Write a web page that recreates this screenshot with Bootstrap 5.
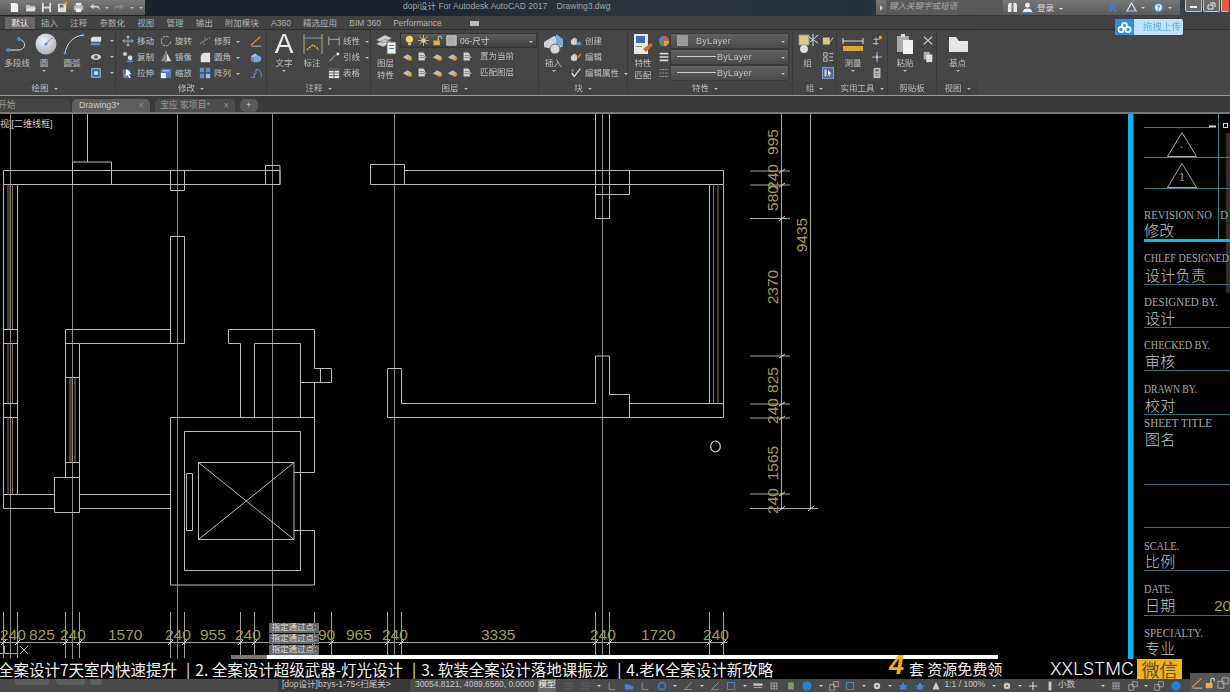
<!DOCTYPE html>
<html lang="zh-CN">
<head>
<meta charset="UTF-8">
<title>AutoCAD 2017 - Drawing3.dwg</title>
<link href="https://cdn.jsdelivr.net/npm/bootstrap@5.3.0/dist/css/bootstrap.min.css" rel="stylesheet">
<style>
html, body { height: 692px; overflow: hidden; background: #000; }
body { font-family: "Liberation Sans", "Noto Sans CJK SC", sans-serif; font-size: 8.5px; color: #c0c0c0; line-height: 12px; }
.app { width: 1230px; height: 692px; position: relative; overflow: hidden; }

/* title bar */
.titlebar { height: 16px; background: linear-gradient(90deg, #1a2530 0, #16202a 30%, #2b3640 50%, #26333f 70%, #3d444a 100%); color: #9ea4a8; font-size: 8.5px; }
.qat { width: 145px; height: 15px; background: linear-gradient(#7a7a7a, #575757); padding-left: 9px; gap: 5px; }
.qat svg { width: 11px; height: 11px; }
.qat i { width: 0; height: 0; border: 2px solid transparent; border-top-color: #bbb; margin-top: 2px; }
.doc-title { margin-left: 258px; width: 473px; }
.infocenter { width: 304px; height: 15px; background: linear-gradient(#777, #5a5a5a); color: #ddd; padding-right: 8px; padding-left: 4px; }
.inf-arrow { width: 0; height: 0; border: 3px solid transparent; border-left-color: #ccc; border-right: 0; }
.searchbox { width: 117px; height: 15px; margin-left: 3px; background: #5a5a5a; color: #a8a8a8; font-style: italic; padding-left: 3px; }
.infocenter svg { width: 11px; height: 11px; }
.inf-car { width: 0; height: 0; border: 2.5px solid transparent; border-top-color: #ccc; margin-top: 3px; }
.winbtns { margin-left: 5px; gap: 1px; width: 45px; height: 12px; }
.winbtn { flex: none; width: 17px; height: 12px; background: #6a6a6a; border: 1px solid #c4c4c4; border-top: 0; border-radius: 0 0 2px 2px; display: flex; align-items: center; justify-content: center; }
.winbtn svg { width: 9px; height: 8px; }
.winbtn.closer { background: #d8603c; width: 8px; border-right: 0; }

/* ribbon tabs */
.rtabs { height: 14px; background: #424242; border-bottom: 1px solid #2f2f2f; padding-left: 5px; padding-top: 1px; }
.rtab { padding: 0 6.1px; line-height: 12px; color: #b0b0b0; }
.rtab.on { background: #666; color: #eee; padding: 0 6.500px; }
.rtab.last-tab { margin-right: 22px; }
.mini-box { width: 9px; height: 5px; background: #bbb; margin-top: 4px; }

/* ribbon */
.rbn { height: 66px; background: #454545; border-bottom: 1px solid #9a9a9a; filter: blur(.3px); }
.rpanel { border-right: 1px solid #3a3a3a; }
.rbody { height: 52px; padding-top: 3px; }
.rfoot { height: 13px; line-height: 13px; text-align: center; background: #434343; color: #bdbdbd; }
.rfoot.shift { padding-right: 10px; }
.rfoot.shift-more { padding-right: 26px; }
.dropdown-toggle::after { margin-left: 5px; vertical-align: 1px; }
.p-draw { width: 116px; } .p-mod { width: 151px; padding-left: 6px; } .p-ann { width: 104px; }
.p-lay { width: 168px; } .p-blk { width: 89px; } .p-prop { width: 165px; } .p-grp { width: 44px; }
.p-util { width: 51px; } .p-clip { width: 49px; } .p-view { width: 41px; border-right: 0; }
.rfill { flex: 1; background: #464646; }
.p-mod .rfoot { margin-left: -6px; }
.lgt { text-align: center; flex: none; }
.lgt svg { width: 24px; height: 22px; display: block; margin: 0 auto 2px; }
.lgt .caret-only { width: 0; height: 0; border: 2.5px solid transparent; border-top-color: #bbb; display: block; margin: 1px auto 0; }
.big-a { font-size: 28px; line-height: 22px; height: 22px; margin-bottom: 2px; color: #e8e8e8; }
.w20 { width: 20px; } .w22 { width: 22px; } .w29 { width: 29px; } .w30 { width: 30px; } .w32 { width: 32px; } .w34 { width: 34px; } .w41 { width: 41px; }
.ml8 { margin-left: 8px; }
.scol { flex: none; }
.srow { height: 16px; display: flex; align-items: center; gap: 3px; white-space: nowrap; }
.srow svg { width: 12px; height: 12px; flex: none; }
.c38 { width: 38px; } .c39 { width: 39px; } .c51 { width: 51px; }
.c8 { margin-left: 8px; }
.nudge { margin-left: 5px; } .nudge2 { margin-left: 2px; }
.cmb { height: 15px; width: 137px; background: linear-gradient(#5c5c5c, #3f3f3f); border: 1px solid #333; display: flex; align-items: center; padding-left: 3px; gap: 3px; color: #ccc; }
.cmb svg { width: 11px; height: 11px; }
.cmb-end { margin-left: auto; margin-right: 3px; }
.layer-rows { width: 137px; }
.layer-rows .srow { gap: 4px; padding-left: 2px; }
.layer-rows svg { width: 11px; height: 11px; }
.layer-rows em { font-style: normal; margin-left: 3px; }
.pcol { width: 12px; }
.pcmb { width: 119px; height: 15.500px; background: linear-gradient(#616161, #4a4a4a); border: 1px solid #3a3a3a; margin-bottom: .5px; display: flex; align-items: center; padding-left: 6px; font-size: 9px; letter-spacing: .3px; }
.swatch { width: 11px; height: 11px; background: #9b9b9b; margin-right: 8px; }
.lnw { width: 39px; height: 1px; background: #ccc; margin-right: 1px; }
.hi-cell { background: #4d6a96; border: 1px solid #7e9ac4; }

/* document tabs */
.dtabs { height: 18px; background: #3b3b3b; border-bottom: 2px solid #777; padding-top: 3px; }
.dtab { height: 13px; line-height: 13px; border-radius: 5px 5px 0 0; padding-left: 7px; color: #9b9b9b; font-size: 8.8px; display: flex; justify-content: space-between; }
.dtab b { font-weight: 400; padding-right: 6px; color: #8a8a8a; font-size: 10px; }
.t-start { width: 78px; margin-left: -8px; background: #444; margin-right: 2px; padding-left: 6px; }
.t-draw { width: 78px; background: #5e5e5e; color: #c9c9c9; margin-right: 5px; }
.t-proj { width: 80px; background: #4d4d4d; margin-right: 5px; padding-left: 5px; }
.t-plus { width: 18px; background: #585858; padding-left: 6px; color: #ccc; border-radius: 5px; }

/* model space */
.stage { height: 545px; position: relative; background: #000; }
.stage svg.draw { position: absolute; inset: 0; width: 1230px; height: 545px; }
.draw text { font-family: "Liberation Sans", "Noto Sans CJK SC", sans-serif; }
.draw .dim { fill: #a49e48; font-size: 15.500px; }
.draw .en { fill: #a8a8a8; font-family: "Liberation Serif", serif; font-size: 11.500px; }
.draw .zh { fill: #c4c4c4; font-size: 15px; font-weight: 300; letter-spacing: .3px; }
.draw .vp { fill: #d0d0d0; font-size: 9px; }
.prompt { position: absolute; left: 269px; width: 50px; height: 9.500px; background: #666; color: #ddd; font-size: 8.5px; line-height: 9.500px; text-align: center; white-space: nowrap; }
.pr1 { top: 509px; } .pr2 { top: 520px; } .pr3 { top: 531px; }
.seek { position: absolute; left: 231px; bottom: 0; width: 767px; height: 4px; background: linear-gradient(90deg, #777 0, #777 36px, #fff 36px); }

/* subtitle strip */
.subs { height: 20px; background: #000; color: #f2f2f2; white-space: nowrap; position: relative; }
.subs-text { font-family: "Noto Sans CJK SC", sans-serif; font-size: 15.500px; line-height: 20px; margin-left: -2px; width: 891px; flex: none; overflow: hidden; }
.sub-sep { margin: 0 5px 0 9px; }
.four { font-family: "Liberation Sans", sans-serif; font-weight: 700; font-style: italic; font-size: 27px; color: #f2b01e; width: 20px; line-height: 20px; margin-top: -4px; flex: none; }
.free { font-family: "Noto Sans CJK SC", sans-serif; font-size: 15px; line-height: 20px; width: 141px; flex: none; }
.wxid { font-family: "Inter", "Liberation Sans", sans-serif; font-weight: 300; font-size: 17.500px; line-height: 20px; width: 87px; flex: none; }
.wx { width: 45px; height: 20px; background: #f0b418; color: #5d4f2a; font-family: "Noto Sans CJK SC", sans-serif; font-size: 18px; line-height: 20px; text-align: center; flex: none; }

/* status bar */
.sbar { height: 13px; background: #4a4a4a; color: #c4c4c4; font-size: 8.5px; line-height: 11px; white-space: nowrap; overflow: hidden; }
.ltab { height: 6px; background: #5e5e5e; border-radius: 0 0 4px 4px; flex: none; }
.l1 { width: 34px; margin-left: 15px; } .l2 { width: 29px; margin-left: 7px; } .l3 { width: 12px; margin-left: 5px; }
.sb-file { width: 132px; height: 13px; background: #383838; margin-left: 176px; padding-left: 4px; flex: none; }
.sb-xyz { width: 128px; padding-left: 5px; flex: none; letter-spacing: -.05px; }
.sb-model { width: 18px; background: #686868; color: #eee; text-align: center; flex: none; margin-right: 5px; }
.sslot { width: 16.500px; height: 13px; flex: none; display: flex; align-items: center; justify-content: center; }
.sslot svg { width: 10px; height: 10px; }
.sw8 { width: 10px; }
.scar { width: 0; height: 0; border: 2.5px solid transparent; border-top-color: #ccc; margin-top: 3px; }
.sb-scale { width: 44px; flex: none; }
.sb-dec { width: 40px; flex: none; }
.tray { position: absolute; right: 0; bottom: 0; width: 40px; height: 19px; background: #555; display: flex; align-items: center; justify-content: space-around; }
.tray svg { width: 12px; height: 12px; }

/* upload badge */
.upload { position: absolute; left: 1115px; top: 19px; width: 68px; height: 16px; background: #bfe3fb; border-radius: 2px; color: #68aee4; font-size: 9.500px; line-height: 16px; }
.up-ic { width: 19px; height: 16px; background: #2b8ee8; border-radius: 2px 0 0 2px; margin-right: 9px; }
.up-ic svg { width: 15px; height: 11px; }
</style>
</head>
<body>
<svg width="0" height="0" class="position-absolute">
  <defs>
    <radialGradient id="gcirc" cx=".4" cy=".35" r=".7"><stop offset="0" stop-color="#f4f4f8"/><stop offset="1" stop-color="#a8acb8"/></radialGradient>
    <symbol id="q-new" viewBox="0 0 12 12"><path d="M2 1h6l2 2v8H2z" fill="#eee"/></symbol>
    <symbol id="q-open" viewBox="0 0 12 12"><path d="M1 3h4l1 1h5v6H1z" fill="#bbb"/><path d="M3 6h9l-2 4H1z" fill="#ddd"/></symbol>
    <symbol id="q-save" viewBox="0 0 12 12"><path d="M1 1h10v10H1z" fill="#ddd"/><path d="M3 1h6v4H3zM3 7h6v4H3z" fill="#666"/></symbol>
    <symbol id="q-saveas" viewBox="0 0 12 12"><path d="M1 2h9v9H1z" fill="#ddd"/><path d="M3 3h4v3H3z" fill="#666"/><path d="M8 0h3v3H8z" fill="#d99a2b"/></symbol>
    <symbol id="q-print" viewBox="0 0 12 12"><path d="M3 1h6v3H3z" fill="#eee"/><path d="M1 4h10v5H1z" fill="#bbb"/><path d="M3 7h6v4H3z" fill="#eee"/></symbol>
    <symbol id="q-undo" viewBox="0 0 12 12"><path d="M1 5l4-3v2h3c3 0 4 2 4 5-1-2-2-3-4-3H5v2z" fill="#ccc"/></symbol>
    <symbol id="q-redo" viewBox="0 0 12 12"><path d="M11 5L7 2v2H4C1 4 0 6 0 9c1-2 2-3 4-3h3v2z" fill="#8a8a8a"/></symbol>
    <symbol id="q-bino" viewBox="0 0 12 12"><path d="M1 4l1-3h3v10H1zM7 1h3l1 3v7H7z" fill="#e6e6e6"/><path d="M5 4h2v3H5z" fill="#999"/></symbol>
    <symbol id="q-user" viewBox="0 0 12 12"><circle cx="6" cy="3.500" r="2.700" fill="#eee"/><path d="M1 11c0-3 2-4 5-4s5 1 5 4z" fill="#eee"/><path d="M0 11.300h12" stroke="#5b8fd0"/></symbol>
    <symbol id="q-x" viewBox="0 0 12 12"><path d="M1 1h3l2 3 2-3h3L8 6l3 5H8L6 8l-2 3H1l3-5z" fill="#4a74c8"/></symbol>
    <symbol id="q-tri" viewBox="0 0 12 12"><path d="M6 1l5 9H1z" fill="none" stroke="#e4e8f4" stroke-width="1.300"/><path d="M1 10h10" stroke="#6a8fd8" stroke-width="1.500"/></symbol>
    <symbol id="q-help" viewBox="0 0 12 12"><circle cx="6" cy="6" r="5.700" fill="#3f7fd0"/><circle cx="6" cy="6" r="3.800" fill="#e8eef8"/><path d="M5 5c0-1.500 2-1.500 2 0 0 1-1 1-1 2M6 8v1" fill="none" stroke="#2f5fa8"/></symbol>
    <symbol id="w-min" viewBox="0 0 9 8"><path d="M1 4h7v2H1z" fill="#eee"/></symbol>
    <symbol id="w-res" viewBox="0 0 9 8"><path d="M1 3h5v4H1zM3 1h5v4" fill="none" stroke="#eee"/></symbol>

    <symbol id="i-move" viewBox="0 0 14 14"><path d="M7 1v12M1 7h12M5 3l2-2 2 2M5 11l2 2 2-2M3 5L1 7l2 2M11 5l2 2-2 2" fill="none" stroke="#ccc"/><circle cx="7" cy="7" r="1.600" fill="#5b8fd0"/></symbol>
    <symbol id="i-copy" viewBox="0 0 14 14"><circle cx="3.500" cy="3.500" r="2.400" fill="#c8c8c8"/><circle cx="9.500" cy="8" r="2.800" fill="#ddd"/><path d="M6 11h7v2H6z" fill="#5b8fd0"/></symbol>
    <symbol id="i-stretch" viewBox="0 0 14 14"><path d="M1 3h9v10H1z" fill="#4d7dbf"/><path d="M5 2l6 6-3 .5 2 4-1.500.7-2-4L4 11z" fill="#fff"/></symbol>
    <symbol id="i-rotate" viewBox="0 0 14 14"><path d="M10 2.500A5.500 5.500 0 1 0 12.500 7" fill="none" stroke="#ccc" stroke-dasharray="3 1"/></symbol>
    <symbol id="i-mirror" viewBox="0 0 14 14"><path d="M6 2v10H1z" fill="#8a8a8a"/><path d="M8 2v10h5z" fill="#ddd"/><path d="M7 0v14" stroke="#ccc"/></symbol>
    <symbol id="i-scale" viewBox="0 0 14 14"><path d="M1 2h12v11H1z" fill="#4d7dbf"/><path d="M1 7h6v6H1z" fill="#eee"/><path d="M3 4h8v1H3z" fill="#dfe8f5"/></symbol>
    <symbol id="i-trim" viewBox="0 0 14 14"><path d="M1 10L13 3" stroke="#bbb" stroke-dasharray="2 1"/><path d="M7 2v4" stroke="#5b8fd0"/><path d="M4 9l3 3" stroke="#999"/></symbol>
    <symbol id="i-fillet" viewBox="0 0 14 14"><path d="M2 13V7c0-3 2-5 5-5h6v11z" fill="#e2e2e2"/><path d="M2 3h3L2 6z" fill="#5b8fd0"/></symbol>
    <symbol id="i-array" viewBox="0 0 14 14"><path d="M1 1h5v5H1zM8 1h5v5H8zM1 8h5v5H1zM8 8h5v5H8z" fill="#5b8fd0"/><path d="M8 8h5v5H8z" fill="#9cc0ec"/></symbol>
    <symbol id="i-erase" viewBox="0 0 14 14"><path d="M1 12L12 2" stroke="#d5913a" stroke-width="1.500"/><path d="M2 13h11" stroke="#ccc"/></symbol>
    <symbol id="i-cube" viewBox="0 0 14 14"><path d="M1 6l5-3 3 2-5 3z" fill="#aac6ea"/><path d="M1 6v5l3 2V8z" fill="#5b8fd0"/><path d="M9 5l4 2v4l-4 2-5 0V8z" fill="#7ba6dd"/></symbol>
    <symbol id="i-offs" viewBox="0 0 14 14"><path d="M1 12h4V8h2V3h3l3 4v5" fill="none" stroke="#6fa0dc"/></symbol>
    <symbol id="i-rect" viewBox="0 0 14 14"><path d="M1 4l2-2h10v6H1z" fill="#dcdcdc"/><path d="M1 9h11v3H1z" fill="#5b8fd0"/></symbol>
    <symbol id="i-eye" viewBox="0 0 14 14"><ellipse cx="7" cy="7" rx="6" ry="3.500" fill="#ccc"/><circle cx="7" cy="7" r="2" fill="#555"/></symbol>
    <symbol id="i-hatch" viewBox="0 0 14 14"><path d="M2 2h10v10H2z" fill="#3f68a5" stroke="#b8c8de"/><path d="M5 5h4v4H5z" fill="#dfe8f5"/></symbol>
    <symbol id="i-lin" viewBox="0 0 14 14"><path d="M1 2v10M13 2v10M1 5h12" fill="none" stroke="#bbb"/></symbol>
    <symbol id="i-lead" viewBox="0 0 14 14"><path d="M2 12L8 5" stroke="#ccc"/><path d="M10 2h3v3h-3z" fill="#eee"/></symbol>
    <symbol id="i-table" viewBox="0 0 14 14"><path d="M1 2h12v11H1z" fill="#e4e4e4"/><path d="M1 2h12v2H1zM1 7h12M1 10h12M7 4v9" stroke="#555" fill="#555"/></symbol>
    <symbol id="i-lyr" viewBox="0 0 14 14"><path d="M2 2h6l2 2v8H2z" fill="#d0d0d0"/><path d="M3 5h6v1H3zM3 8h6v1H3z" fill="#4d7dbf"/><path d="M9 6l4 2-4 2z" fill="#a8a8a8"/></symbol>
    <symbol id="i-lyr2" viewBox="0 0 14 14"><path d="M1 8l6-4 6 4-6 3z" fill="#bdbdbd"/><circle cx="10" cy="10" r="2.500" fill="#e0a92c"/></symbol>
    <symbol id="i-bulb" viewBox="0 0 14 14"><circle cx="7" cy="5.500" r="4.500" fill="#f0d660"/><path d="M5 10h4v3H5z" fill="#bbb"/></symbol>
    <symbol id="i-sun" viewBox="0 0 14 14"><circle cx="7" cy="7" r="3" fill="#e8d8a0"/><path d="M7 0v14M0 7h14M2 2l10 10M12 2L2 12" stroke="#d9c890"/></symbol>
    <symbol id="i-lock" viewBox="0 0 14 14"><path d="M2 7h8v6H2z" fill="#e0b040"/><path d="M8 7V3c0-2 4-2 4 0v2" fill="none" stroke="#ddd" stroke-width="1.200"/></symbol>
    <symbol id="i-swatch" viewBox="0 0 14 14"><path d="M1 1h12v12H1z" fill="#aaa" stroke="#ddd"/></symbol>
    <symbol id="i-make" viewBox="0 0 14 14"><path d="M1 6l4-3 3 2v6l-4 1-3-2z" fill="#ccc"/><path d="M8 8h5v4H8z" fill="#5b8fd0"/></symbol>
    <symbol id="i-blkedit" viewBox="0 0 14 14"><path d="M1 6l4-3 3 2v6l-4 1-3-2z" fill="#ccc"/><path d="M8 8l4-5 1 1-4 5z" fill="#e0a030"/></symbol>
    <symbol id="i-attr" viewBox="0 0 14 14"><path d="M2 7l3 4 7-9" fill="none" stroke="#ddd" stroke-width="1.500"/><circle cx="3" cy="4" r="1.500" fill="#d07030"/></symbol>
    <symbol id="i-wheel" viewBox="0 0 14 14"><path d="M7 7V1a6 6 0 0 1 6 6z" fill="#d05a40"/><path d="M7 7h6a6 6 0 0 1-6 6z" fill="#e0a030"/><path d="M7 7v6a6 6 0 0 1-6-6z" fill="#4d9a5a"/><path d="M7 7H1a6 6 0 0 1 6-6z" fill="#5b7fd0"/></symbol>
    <symbol id="i-lines" viewBox="0 0 14 14"><path d="M2 2h10v2H2zM2 6h10v2H2zM2 10h10v2H2z" fill="#ddd"/></symbol>
    <symbol id="i-dash" viewBox="0 0 14 14"><path d="M2 3h10M2 7h10M2 11h10" stroke="#aaa" stroke-dasharray="2 1"/></symbol>
    <symbol id="i-gp1" viewBox="0 0 14 14"><path d="M1 3h8v8H1z" fill="#d8cb88"/><path d="M7 11l6-8" stroke="#ddd"/></symbol>
    <symbol id="i-gp2" viewBox="0 0 14 14"><path d="M2 2h4v4H2zM2 8h4v4H2z" fill="none" stroke="#ccc"/><path d="M8 3h5M8 7h5M8 11h5" stroke="#ccc"/></symbol>
    <symbol id="i-gp3" viewBox="0 0 14 14"><path d="M2 2h3v10H2z" fill="#ccd"/><path d="M7 3l5 5-3 .5 1 3-1 .5-1.500-3L7 11z" fill="#fff"/></symbol>
    <symbol id="i-pt" viewBox="0 0 14 14"><path d="M2 10h7M6 3v9M3 5h7" stroke="#ccc"/><circle cx="11" cy="3" r="2" fill="#e0a030"/></symbol>
    <symbol id="i-star" viewBox="0 0 14 14"><path d="M7 1v12M1 7h12" stroke="#ccc"/><path d="M7 4l1 3-1 3-1-3z" fill="#ddd"/></symbol>
    <symbol id="i-calc" viewBox="0 0 14 14"><path d="M3 1h8v12H3z" fill="#bbb"/><path d="M5 3h4v2H5zM5 7h4v1H5zM5 9h4v1H5z" fill="#555"/></symbol>
    <symbol id="i-cut" viewBox="0 0 14 14"><path d="M2 2l10 9M12 2L2 11" stroke="#ddd" stroke-width="1.200"/></symbol>
    <symbol id="i-pcopy" viewBox="0 0 14 14"><path d="M2 1h7v9H2z" fill="#aaa"/><path d="M5 4h7v9H5z" fill="#ddd"/></symbol>
    <symbol id="s-grid" viewBox="0 0 14 14"><path d="M1 3h12M1 7h12M1 11h12" stroke="#888" stroke-dasharray="1 1"/></symbol>
    <symbol id="s-l" viewBox="0 0 14 14"><path d="M3 2v10h9" fill="none" stroke="#aaa"/></symbol>
    <symbol id="s-blue" viewBox="0 0 14 14"><path d="M1 5h6l6 3v4H1z" fill="#3f86d8"/></symbol>
    <symbol id="s-arc" viewBox="0 0 14 14"><circle cx="7" cy="7" r="5" fill="none" stroke="#3f86d8" stroke-width="2"/></symbol>
    <symbol id="s-ang" viewBox="0 0 14 14"><path d="M2 12L12 2M2 12h10" fill="none" stroke="#aaa"/></symbol>
    <symbol id="s-box" viewBox="0 0 14 14"><path d="M2 2h10v10H2z" fill="none" stroke="#3f86d8" stroke-width="1.500"/></symbol>
    <symbol id="s-ln" viewBox="0 0 14 14"><path d="M1 4h12v2H1zM1 9h12" stroke="#ccc" fill="#ccc"/></symbol>
    <symbol id="s-hat" viewBox="0 0 14 14"><path d="M2 2h10v10H2z" fill="#999"/><path d="M2 5h10M2 9h10M5 2v10M9 2v10" stroke="#555"/></symbol>
    <symbol id="s-grn" viewBox="0 0 14 14"><path d="M3 2h8v10H3z" fill="#7f9a64"/></symbol>
    <symbol id="s-man" viewBox="0 0 14 14"><path d="M7 1l5 11H2z" fill="#3f86d8"/><path d="M1 7h12" stroke="#3f86d8" stroke-width="2"/></symbol>
    <symbol id="s-manw" viewBox="0 0 14 14"><path d="M7 1l5 11H2z" fill="#ccc"/></symbol>
    <symbol id="s-gear" viewBox="0 0 14 14"><circle cx="7" cy="7" r="4.500" fill="#ccc"/><circle cx="7" cy="7" r="1.500" fill="#555"/></symbol>
    <symbol id="s-plus" viewBox="0 0 14 14"><path d="M7 1v12M1 7h12" stroke="#ddd" stroke-width="1.500"/></symbol>
    <symbol id="s-bar" viewBox="0 0 14 14"><path d="M5 1h4v12H5z" fill="#ccc"/></symbol>
    <symbol id="s-win" viewBox="0 0 14 14"><path d="M1 5h7v8H1z" fill="none" stroke="#bbb"/><path d="M6 1h7v7H6z" fill="none" stroke="#bbb"/></symbol>
    <symbol id="s-ok" viewBox="0 0 14 14"><circle cx="7" cy="7" r="6.500" fill="#2b7fd8"/></symbol>
  </defs>
</svg>

<div class="app d-flex flex-column">
  <header class="titlebar d-flex align-items-start flex-shrink-0">
    <div class="qat d-flex align-items-center flex-shrink-0">
      <svg><use href="#q-new"/></svg><svg><use href="#q-open"/></svg><svg><use href="#q-save"/></svg><svg><use href="#q-saveas"/></svg><svg><use href="#q-print"/></svg><svg><use href="#q-undo"/></svg><i></i><svg><use href="#q-redo"/></svg><i></i><i></i>
    </div>
    <div class="doc-title flex-shrink-0">dopi设计 For Autodesk AutoCAD 2017 &nbsp;&nbsp;&nbsp;Drawing3.dwg</div>
    <div class="infocenter d-flex align-items-center flex-shrink-0">
      <i class="inf-arrow"></i>
      <div class="searchbox">键入关键字或短语</div>
      <svg class="ms-1"><use href="#q-bino"/></svg>
      <svg class="ms-1"><use href="#q-user"/></svg>
      <span class="ms-1 dropdown-toggle flex-grow-1">登录</span>
      <svg><use href="#q-x"/></svg>
      <svg class="ms-2"><use href="#q-tri"/></svg><i class="inf-car ms-1"></i>
      <svg class="ms-2"><use href="#q-help"/></svg><i class="inf-car ms-1"></i>
    </div>
    <div class="winbtns d-flex flex-shrink-0">
      <div class="winbtn"><svg><use href="#w-min"/></svg></div><div class="winbtn"><svg><use href="#w-res"/></svg></div><div class="winbtn closer"></div>
    </div>
  </header>

  <nav class="rtabs d-flex flex-shrink-0">
    <span class="rtab on">默认</span><span class="rtab">插入</span><span class="rtab">注释</span><span class="rtab">参数化</span><span class="rtab">视图</span><span class="rtab">管理</span><span class="rtab">输出</span><span class="rtab">附加模块</span><span class="rtab">A360</span><span class="rtab">精选应用</span><span class="rtab">BIM 360</span><span class="rtab last-tab">Performance</span><span class="mini-box"></span>
  </nav>

  <section class="rbn d-flex flex-shrink-0">
    <div class="rpanel p-draw">
      <div class="rbody d-flex">
        <div class="lgt w34"><svg viewBox="0 0 24 22"><path d="M2 17h11c8 0 9-9 1-11" fill="none" stroke="#e6e6e6"/><circle cx="3" cy="17" r="2" fill="#4f8ad0"/><circle cx="14" cy="6" r="2" fill="#4f8ad0"/></svg>多段线</div>
        <div class="lgt w20"><svg viewBox="0 0 24 22"><circle cx="12" cy="11" r="10.500" fill="url(#gcirc)"/><path d="M12 11l6-6" stroke="#5b8fd0"/><circle cx="12" cy="11" r="1.500" fill="#5b8fd0"/></svg>圆<i class="caret-only"></i></div>
        <div class="lgt w20 ml8"><svg viewBox="0 0 24 22"><path d="M3 21C4 11 11 3 21 2" fill="none" stroke="#ddd"/><circle cx="3" cy="20" r="1.500" fill="#5b8fd0"/><circle cx="21" cy="2" r="1.500" fill="#5b8fd0"/></svg>圆弧<i class="caret-only"></i></div>
        <div class="scol c8">
          <div class="srow dropdown-toggle"><svg><use href="#i-rect"/></svg></div>
          <div class="srow dropdown-toggle"><svg><use href="#i-eye"/></svg></div>
          <div class="srow dropdown-toggle"><svg><use href="#i-hatch"/></svg></div>
        </div>
      </div>
      <div class="rfoot shift-more"><span class="dropdown-toggle">绘图</span></div>
    </div>

    <div class="rpanel p-mod">
      <div class="rbody d-flex">
        <div class="scol c38">
          <div class="srow"><svg><use href="#i-move"/></svg>移动</div>
          <div class="srow"><svg><use href="#i-copy"/></svg>复制</div>
          <div class="srow"><svg><use href="#i-stretch"/></svg>拉伸</div>
        </div>
        <div class="scol c39">
          <div class="srow"><svg><use href="#i-rotate"/></svg>旋转</div>
          <div class="srow"><svg><use href="#i-mirror"/></svg>镜像</div>
          <div class="srow"><svg><use href="#i-scale"/></svg>缩放</div>
        </div>
        <div class="scol c51">
          <div class="srow"><svg><use href="#i-trim"/></svg><span class="dropdown-toggle">修剪</span></div>
          <div class="srow"><svg><use href="#i-fillet"/></svg><span class="dropdown-toggle">圆角</span></div>
          <div class="srow"><svg><use href="#i-array"/></svg><span class="dropdown-toggle">阵列</span></div>
        </div>
        <div class="scol">
          <div class="srow"><svg><use href="#i-erase"/></svg></div>
          <div class="srow"><svg><use href="#i-cube"/></svg></div>
          <div class="srow"><svg><use href="#i-offs"/></svg></div>
        </div>
      </div>
      <div class="rfoot"><span class="dropdown-toggle">修改</span></div>
    </div>

    <div class="rpanel p-ann">
      <div class="rbody d-flex">
        <div class="lgt w34"><div class="big-a">A</div>文字<i class="caret-only"></i></div>
        <div class="lgt w22"><svg viewBox="0 0 24 22"><path d="M3 1v20M21 1v20" stroke="#b9a878"/><path d="M3 5h18" stroke="#6fa0dc"/><path d="M6 17l3-3 3-2 3 2 3 3" fill="none" stroke="#e0b040" stroke-dasharray="2 1" stroke-width="1.500"/></svg>标注</div>
        <div class="scol nudge">
          <div class="srow"><svg><use href="#i-lin"/></svg><span class="dropdown-toggle">线性</span></div>
          <div class="srow"><svg><use href="#i-lead"/></svg><span class="dropdown-toggle">引线</span></div>
          <div class="srow"><svg><use href="#i-table"/></svg>表格</div>
        </div>
      </div>
      <div class="rfoot"><span class="dropdown-toggle">注释</span></div>
    </div>

    <div class="rpanel p-lay">
      <div class="rbody d-flex">
        <div class="lgt w29"><svg viewBox="0 0 24 22"><path d="M2 7l9-5 7 3-9 5zM2 11l9-5 7 3-9 5z" fill="#d0d0d0" stroke="#555" stroke-width=".5"/><path d="M13 9h9v12h-9z" fill="#eee" stroke="#666"/><path d="M15 12h5v1h-5zM15 15h5v1h-5z" fill="#4d7dbf"/></svg>图层<br>特性</div>
        <div class="layer-rows">
          <div class="cmb"><svg><use href="#i-bulb"/></svg><svg><use href="#i-sun"/></svg><svg><use href="#i-lock"/></svg><svg><use href="#i-swatch"/></svg><span>06-尺寸</span><span class="cmb-end dropdown-toggle"></span></div>
          <div class="srow"><svg><use href="#i-lyr2"/></svg><svg><use href="#i-lyr"/></svg><svg><use href="#i-lyr2"/></svg><svg><use href="#i-lyr2"/></svg><svg><use href="#i-lyr"/></svg><em>置为当前</em></div>
          <div class="srow"><svg><use href="#i-lyr2"/></svg><svg><use href="#i-lyr"/></svg><svg><use href="#i-lyr2"/></svg><svg><use href="#i-lyr2"/></svg><svg><use href="#i-lyr"/></svg><em>匹配图层</em></div>
        </div>
      </div>
      <div class="rfoot"><span class="dropdown-toggle">图层</span></div>
    </div>

    <div class="rpanel p-blk">
      <div class="rbody d-flex">
        <div class="lgt w29"><svg viewBox="0 0 24 22"><path d="M2 9l10-6 8 3v8l-10 2-8-2z" fill="#c9d3e0"/><path d="M14 1l7 5v8l-7-3z" fill="#7ea6d8"/><circle cx="13" cy="16" r="5" fill="#d8d8d8" stroke="#666"/></svg>插入<i class="caret-only"></i></div>
        <div class="scol nudge2">
          <div class="srow"><svg><use href="#i-make"/></svg>创建</div>
          <div class="srow"><svg><use href="#i-blkedit"/></svg>编辑</div>
          <div class="srow"><svg><use href="#i-attr"/></svg><span class="dropdown-toggle">编辑属性</span></div>
        </div>
      </div>
      <div class="rfoot"><span class="dropdown-toggle">块</span></div>
    </div>

    <div class="rpanel p-prop">
      <div class="rbody d-flex">
        <div class="lgt w30"><svg viewBox="0 0 24 22"><path d="M3 1h14v20H3z" fill="#e8e8e8"/><path d="M5 3h9v7H5z" fill="#3f6ea8"/><path d="M5 13h6v1H5z" fill="#888"/><path d="M12 16l8-6 2 2-7 7z" fill="#c0752a"/></svg>特性<br>匹配</div>
        <div class="pcol">
          <div class="srow"><svg><use href="#i-wheel"/></svg></div>
          <div class="srow"><svg><use href="#i-lines"/></svg></div>
          <div class="srow"><svg><use href="#i-dash"/></svg></div>
        </div>
        <div>
          <div class="pcmb"><span class="swatch"></span>ByLayer<span class="cmb-end dropdown-toggle"></span></div>
          <div class="pcmb"><span class="lnw"></span>ByLayer<span class="cmb-end dropdown-toggle"></span></div>
          <div class="pcmb"><span class="lnw"></span>ByLayer<span class="cmb-end dropdown-toggle"></span></div>
        </div>
      </div>
      <div class="rfoot shift"><span class="dropdown-toggle">特性</span></div>
    </div>

    <div class="rpanel p-grp">
      <div class="rbody d-flex">
        <div class="lgt w29"><svg viewBox="0 0 24 22"><path d="M3 2h10v10H3z" fill="#d8cb88" stroke="#999"/><circle cx="8" cy="16" r="4" fill="#ddd"/><path d="M14 9l8-7M13 4l9 6M17 1v12" stroke="#cfe4fa"/></svg>组</div>
        <div class="scol">
          <div class="srow"><svg><use href="#i-gp1"/></svg></div>
          <div class="srow"><svg><use href="#i-gp2"/></svg></div>
          <div class="srow"><svg class="hi-cell"><use href="#i-gp3"/></svg></div>
        </div>
      </div>
      <div class="rfoot"><span class="dropdown-toggle">组</span></div>
    </div>

    <div class="rpanel p-util">
      <div class="rbody d-flex">
        <div class="lgt w32"><svg viewBox="0 0 24 22"><path d="M2 5v6M22 5v6M2 8h20" stroke="#ddd"/><path d="M2 13h20v5H2z" fill="#d8a63a"/></svg>测量<i class="caret-only"></i></div>
        <div class="scol nudge2">
          <div class="srow"><svg><use href="#i-pt"/></svg></div>
          <div class="srow"><svg><use href="#i-star"/></svg></div>
          <div class="srow"><svg><use href="#i-calc"/></svg></div>
        </div>
      </div>
      <div class="rfoot"><span class="dropdown-toggle">实用工具</span></div>
    </div>

    <div class="rpanel p-clip">
      <div class="rbody d-flex">
        <div class="lgt w34"><svg viewBox="0 0 24 22"><path d="M4 3h12v16H4z" fill="#a9a9a9"/><path d="M8 1h4v3H8z" fill="#ddd"/><path d="M10 7h10v14H10z" fill="#efefef"/></svg>粘贴<i class="caret-only"></i></div>
        <div class="scol">
          <div class="srow"><svg><use href="#i-cut"/></svg></div>
          <div class="srow"><svg><use href="#i-pcopy"/></svg></div>
        </div>
      </div>
      <div class="rfoot">剪贴板</div>
    </div>

    <div class="rpanel p-view">
      <div class="rbody d-flex">
        <div class="lgt w41"><svg viewBox="0 0 24 22"><path d="M3 4h7l3 4h9v11H3z" fill="#e6e6e6"/></svg>基点<i class="caret-only"></i></div>
      </div>
      <div class="rfoot"><span class="dropdown-toggle">视图</span></div>
    </div>
    <div class="rfill"></div>
  </section>

  <div class="dtabs d-flex flex-shrink-0">
    <div class="dtab t-start">开始</div>
    <div class="dtab t-draw">Drawing3*<b>×</b></div>
    <div class="dtab t-proj">宝应 家项目*<b>×</b></div>
    <div class="dtab t-plus">+</div>
  </div>

  <main class="stage flex-shrink-0">
    <svg class="draw" viewBox="0 114 1230 545">
      <!-- axes -->
      <path d="M10.500 114V659M72.500 114V659M177.500 114V659M272.500 114V659M394.500 114V659M602.500 114V655" fill="none" stroke="#8c8c8c"/>

      <!-- left plan -->
      <g fill="none" stroke="#bdbdbd">
        <path d="M3.500 170.500H280V184.500H3.500zM72.500 162H111.500V184.500M72.500 162V184.500M87.500 114V162M170.500 170.500V190.500H184.500V170.500M265.500 184.500V165.500H280V184.500"/>
        <path d="M3.500 184.500V494.500M17.500 184.500V494.500M3.500 329.500H17.500V343.500H3.500M3.500 403.500H17.500V417.500H3.500"/>
        <path d="M170.500 343.500V236.500H184.500V343.500H79.500V477.500M170.500 329.500H65.500V477.500M65.500 343.500H79.500M65.500 377.500H79.500M65.500 462.500H79.500"/>
        <path d="M54.500 477.500H79.500V512.500H54.500zM3.500 494.500H54.500M3.500 494.500V508.500H54.500M79.500 494.500H170.500M79.500 508.500H170.500"/>
        <path d="M170.500 417.500H314.500V472.500H294M170.500 417.500V585H314.500V530.500H294"/>
        <path d="M184.500 431.500H300.500V570.500H184.500zM198.500 462.500H294V539.500H198.500zM198.500 462.500L294 539.500M294 462.500L198.500 539.500M186.500 473.500H192.500V530.500H186.500z"/>
        <path d="M240.500 417.500V343.500H228.500V329.500H314.500V368.500H331.500V382.500H300.500M320.500 368.500V382.500M254.500 417.500V343.500H300.500V417.500M314.500 382.500V417.500"/>
      </g>
      <path d="M8 184.500V329M10 184.500V329M12.500 184.500V329M8 343.500V403M12.500 343.500V403M8 417.500V494M12.500 417.500V494M70 377.500V462.500M72 377.500V462.500M75 377.500V462.500" fill="none" stroke="#8b7b5c"/>

      <!-- right plan -->
      <g fill="none" stroke="#bdbdbd">
        <path d="M404.500 170.500H723.500V184.500H404.500M370.500 164.500H404.500V184.500H370.500z"/>
        <path d="M595.500 114V218.500H609.500V114M595.500 170.500H629.500V194.500H595.500"/>
        <path d="M709.500 184.500V403.500M723.500 184.500V417.500"/>
        <path d="M387.500 417.500V368.500H401.500V403.500H595.500V356H609.500V394.500H629.500V417.500M387.500 417.500H723.500M629.500 403.500H723.500"/>
      </g>
      <path d="M713.500 184.500V403.500M718 184.500V403.500" fill="none" stroke="#8b7b3c"/>
      <ellipse cx="715.500" cy="446.500" rx="4.800" ry="5.500" fill="none" stroke="#d8d8d8" stroke-width="1.200"/>

      <!-- bottom dims -->
      <path d="M0 642.500H727M3.500 612V658M17.500 612V658M65.500 612V658M79.500 612V658M170.500 612V658M184.500 612V658M240.500 612V658M254.500 612V658M314.500 612V658M331.500 612V658M387.500 612V658M401.500 612V658M595.500 612V658M609.500 612V658M709.500 612V658M723.500 612V658" fill="none" stroke="#a2a2a2"/>
      <path d="M1 645L6 640M15 645L20 640M63 645L68 640M77 645L82 640M168 645L173 640M182 645L187 640M238 645L243 640M252 645L257 640M312 645L317 640M329 645L334 640M385 645L390 640M399 645L404 640M593 645L598 640M607 645L612 640M707 645L712 640M721 645L726 640" stroke="#ddd"/>
      <g>
        <text class="dim" x="0" y="640">240</text><text class="dim" x="29" y="640">825</text><text class="dim" x="60" y="640">240</text>
        <text class="dim" x="108" y="640">1570</text><text class="dim" x="165" y="640">240</text><text class="dim" x="200" y="640">955</text>
        <text class="dim" x="235" y="640">240</text><text class="dim" x="318" y="640">90</text><text class="dim" x="346" y="640">965</text>
        <text class="dim" x="382" y="640">240</text><text class="dim" x="481" y="640">3335</text><text class="dim" x="590" y="640">240</text>
        <text class="dim" x="641" y="640">1720</text><text class="dim" x="703" y="640">240</text>
      </g>
      <path d="M0 653.500H17M4.500 646V654" fill="none" stroke="#aaa"/>
      <path d="M20 646L28 654M28 646L20 654" stroke="#bbb"/>

      <!-- right dims -->
      <path d="M781.500 114V508.500M810.500 114V508.500M750 171H790M750 185H790M750 218.500H790M750 356H790M750 404H790M750 418H790M750 494H790M750 508.500H818" fill="none" stroke="#a8a8a8"/>
      <path d="M779 173L785 169M779 187L785 183M779 221L785 216M779 358L785 354M779 406L785 402M779 420L785 416M779 496L785 492M779 511L785 506M808 511L814 506" stroke="#ddd"/>
      <g text-anchor="middle">
        <text class="dim" transform="rotate(-90 778 142)" x="778" y="142">995</text>
        <text class="dim" transform="rotate(-90 778 177)" x="778" y="177">240</text>
        <text class="dim" transform="rotate(-90 778 198)" x="778" y="198">580</text>
        <text class="dim" transform="rotate(-90 778 287)" x="778" y="287">2370</text>
        <text class="dim" transform="rotate(-90 778 380)" x="778" y="380">825</text>
        <text class="dim" transform="rotate(-90 778 411)" x="778" y="411">240</text>
        <text class="dim" transform="rotate(-90 778 463)" x="778" y="463">1565</text>
        <text class="dim" transform="rotate(-90 778 501)" x="778" y="501">240</text>
        <text class="dim" transform="rotate(-90 807 235)" x="807" y="235">9435</text>
      </g>

      <!-- title block -->
      <rect x="1128" y="114" width="5.500" height="545" fill="#12b4ea"/>
      <rect x="1226" y="133" width="4" height="160" fill="#2e2e2e"/>
      <path d="M1144 127.500H1210M1144 157.500H1230M1144 188.500H1230M1218.500 114V240" fill="none" stroke="#3d7f93"/>
      <path d="M1144 284.500H1230M1144 327.500H1230M1144 370.500H1230M1144 414.500H1230M1144 484.500H1230M1144 527.500H1230M1144 570.500H1230M1144 615.500H1230" fill="none" stroke="#2f6f88"/>
      <rect x="1144" y="239" width="86" height="3" fill="#12b4ea"/>
      <path d="M1182 132.500L1167.500 156.500H1196.500zM1182 163.500L1167.500 187.500H1196.500z" fill="none" stroke="#a8a8a8"/>
      <rect x="1209" y="125.500" width="7" height="2" fill="#ddd"/>
      <rect x="1223.500" y="123.500" width="4" height="4" fill="none" stroke="#ddd"/>
      <text class="en" x="1180" y="148">.</text><text class="en" x="1179" y="181">1</text>
      <text class="en" x="1144" y="219" textLength="68" lengthAdjust="spacingAndGlyphs">REVISION NO</text><text class="en" x="1220" y="219" textLength="8" lengthAdjust="spacingAndGlyphs">D</text><text class="zh" x="1144" y="236">修改</text>
      <text class="en" x="1144" y="262" textLength="85" lengthAdjust="spacingAndGlyphs">CHLEF DESIGNED</text><text class="zh" x="1145" y="281">设计负责</text>
      <text class="en" x="1144" y="306" textLength="74" lengthAdjust="spacingAndGlyphs">DESIGNED BY.</text><text class="zh" x="1145" y="324">设计</text>
      <text class="en" x="1144" y="349" textLength="66" lengthAdjust="spacingAndGlyphs">CHECKED BY.</text><text class="zh" x="1145" y="367">审核</text>
      <text class="en" x="1144" y="393" textLength="53" lengthAdjust="spacingAndGlyphs">DRAWN BY.</text><text class="zh" x="1145" y="411">校对</text>
      <text class="en" x="1144" y="427" textLength="68" lengthAdjust="spacingAndGlyphs">SHEET TITLE</text><text class="zh" x="1145" y="445">图名</text>
      <text class="en" x="1144" y="550" textLength="35" lengthAdjust="spacingAndGlyphs">SCALE.</text><text class="zh" x="1145" y="567">比例</text>
      <text class="en" x="1144" y="593" textLength="29" lengthAdjust="spacingAndGlyphs">DATE.</text><text class="zh" x="1145" y="611">日期</text>
      <text class="dim" x="1214" y="611">20</text>
      <text class="en" x="1144" y="637" textLength="59" lengthAdjust="spacingAndGlyphs">SPECIALTY.</text><text class="zh" x="1145" y="654">专业</text>

      <text class="vp" x="0" y="127">视][二维线框]</text>
    </svg>
    <div class="prompt pr1">指定通过点:</div>
    <div class="prompt pr2">指定通过点:</div>
    <div class="prompt pr3">指定通过点:</div>
    <div class="seek"></div>
  </main>

  <div class="subs d-flex flex-shrink-0">
    <div class="subs-text">全案设计7天室内快速提升<span class="sub-sep">|</span>2. 全案设计超级武器-灯光设计<span class="sub-sep">|</span>3. 软装全案设计落地课振龙<span class="sub-sep">|</span>4.老K全案设计新攻略</div>
    <div class="four">4</div>
    <div class="free">套 资源免费领</div>
    <div class="wxid">XXLSTMC</div>
    <div class="wx">微信</div>
  </div>

  <footer class="sbar d-flex flex-shrink-0">
    <span class="ltab l1"></span><span class="ltab l2"></span><span class="ltab l3"></span>
    <div class="sb-file">[dop设计]bzys-1-75&lt;扫尾关&gt;</div>
    <div class="sb-xyz">30054.8121, 4089.6560, 0.0000</div>
    <div class="sb-model">模型</div>
    <div class="sslot"><svg><use href="#s-grid"/></svg></div><div class="sslot"><svg><use href="#s-grid"/></svg></div><div class="sslot sw8"><i class="scar"></i></div>
    <div class="sslot"><svg><use href="#s-l"/></svg></div><div class="sslot"><svg><use href="#s-blue"/></svg></div><div class="sslot"><svg><use href="#s-l"/></svg></div><div class="sslot"><svg><use href="#s-arc"/></svg></div><div class="sslot sw8"><i class="scar"></i></div>
    <div class="sslot"><svg><use href="#s-ang"/></svg></div><div class="sslot sw8"><i class="scar"></i></div><div class="sslot"><svg><use href="#s-ang"/></svg></div><div class="sslot"><svg><use href="#s-box"/></svg></div><div class="sslot sw8"><i class="scar"></i></div>
    <div class="sslot"><svg><use href="#s-ln"/></svg></div><div class="sslot"><svg><use href="#s-hat"/></svg></div><div class="sslot"><svg><use href="#s-grn"/></svg></div><div class="sslot"><svg><use href="#s-ok"/></svg></div><div class="sslot sw8"><i class="scar"></i></div>
    <div class="sslot"><svg><use href="#s-win"/></svg></div><div class="sslot"><svg><use href="#s-box"/></svg></div><div class="sslot sw8"><i class="scar"></i></div><div class="sslot"><svg><use href="#s-gear"/></svg></div><div class="sslot sw8"><i class="scar"></i></div>
    <div class="sslot"><svg><use href="#s-man"/></svg></div><div class="sslot"><svg><use href="#s-man"/></svg></div><div class="sslot"><svg><use href="#s-manw"/></svg></div>
    <div class="sb-scale">1:1 / 100%</div><div class="sslot sw8"><i class="scar"></i></div>
    <div class="sslot"><svg><use href="#s-gear"/></svg></div><div class="sslot sw8"><i class="scar"></i></div>
    <div class="sslot"><svg><use href="#s-plus"/></svg></div><div class="sslot"><svg><use href="#s-bar"/></svg></div>
    <div class="sb-dec">小数</div><div class="sslot sw8"><i class="scar"></i></div>
    <div class="sslot"><svg><use href="#s-hat"/></svg></div><div class="sslot"><svg><use href="#s-win"/></svg></div><div class="sslot sw8"><i class="scar"></i></div>
    <div class="sslot"><svg><use href="#s-win"/></svg></div><div class="sslot"><svg><use href="#s-ok"/></svg></div>
  </footer>
  <div class="tray">
    <svg><use href="#i-erase"/></svg><svg><use href="#i-lock"/></svg><svg><use href="#s-win"/></svg>
  </div>

  <div class="upload d-flex align-items-start">
    <span class="up-ic d-flex align-items-center justify-content-center"><svg viewBox="0 0 15 11"><g fill="none" stroke="#fff" stroke-width="1.800"><circle cx="7.500" cy="3.500" r="2.500"/><circle cx="4" cy="7.500" r="2.600"/><circle cx="11" cy="7.500" r="2.600"/></g></svg></span>
    <span>拖拽上传</span>
  </div>
</div>
<script src="https://cdn.jsdelivr.net/npm/bootstrap@5.3.0/dist/js/bootstrap.bundle.min.js"></script>
</body>
</html>
